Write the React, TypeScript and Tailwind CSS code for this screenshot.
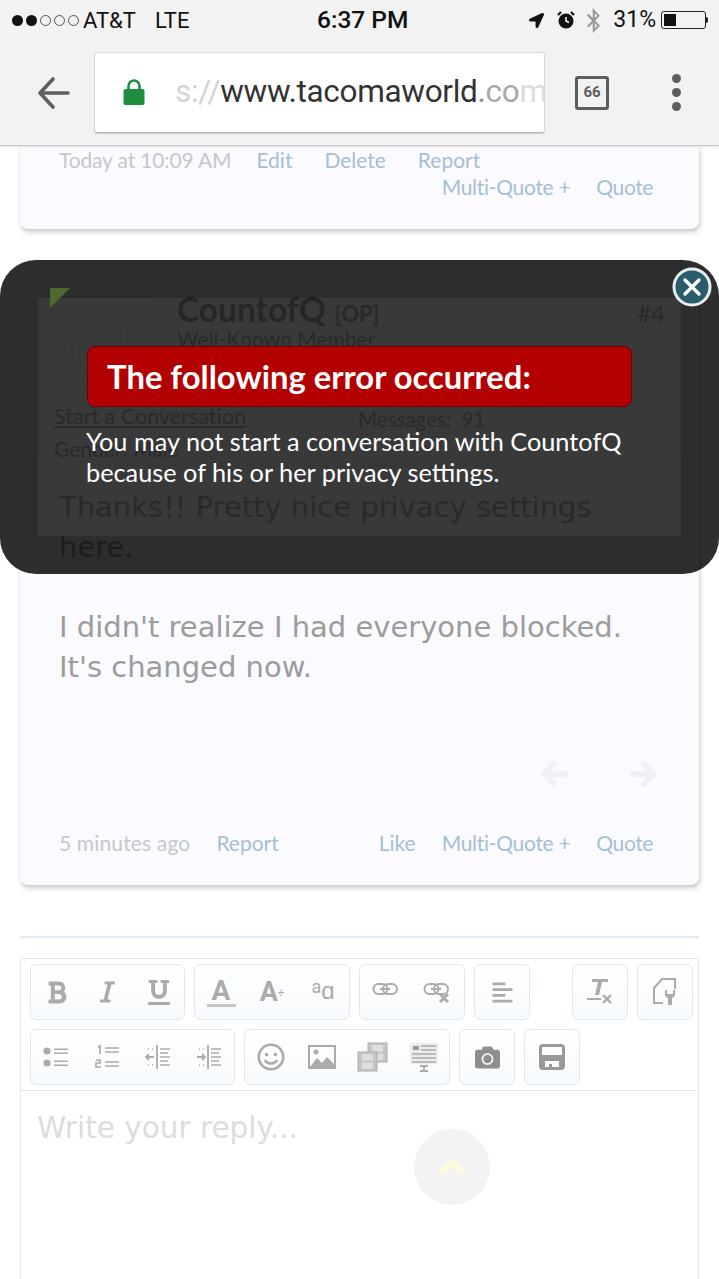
import React from 'react';
import { FaBold, FaItalic, FaUnderline, FaCamera, FaRegSmile, FaAlignLeft, FaLocationArrow, FaBluetoothB } from 'react-icons/fa';

const UI = { fontFamily: 'Roboto, sans-serif' };
const TREB = { fontFamily: 'Lato, sans-serif' };
const DEJA = { fontFamily: '"DejaVu Sans", sans-serif' };

const StatusBar = () => (
  <div className="flex h-[40px] items-center pl-[12px] pr-[11px] text-[22px] text-[#111]" style={UI}>
    <div className="flex w-[305px] items-center">
      <div className="flex gap-[3px]">
        {[0, 1].map((i) => <span key={i} className="h-[11px] w-[11px] rounded-full bg-[#111]" />)}
        {[2, 3, 4].map((i) => <span key={i} className="h-[11px] w-[11px] rounded-full border border-[#555]" />)}
      </div>
      <span className="ml-[4px]">AT&amp;T</span>
      <span className="ml-[19px]">LTE</span>
    </div>
    <span className="text-[24.5px] font-medium">6:37 PM</span>
    <div className="ml-auto flex items-center">
      <FaLocationArrow className="h-[15px] w-[15px] text-[#111]" />
      <svg viewBox="0 0 20 20" className="ml-[12px] h-[20px] w-[20px]">
        <circle cx="10" cy="11" r="7.5" fill="#111" />
        <path d="M10 7v4l3 1.5" stroke="#fff" strokeWidth="1.5" fill="none" />
        <path d="M2 5l3-3M18 5l-3-3" stroke="#111" strokeWidth="2.2" />
      </svg>
      <FaBluetoothB className="ml-[9px] h-[25px] w-[17px] text-[#999]" />
      <span className="ml-[11px] pt-[1px] text-[23px]">31%</span>
      <div className="ml-[5px] flex h-[18px] w-[45px] rounded-[3px] border border-[#222] p-[2px]">
        <div className="w-[12px] bg-[#111]" />
      </div>
      <div className="h-[6px] w-[2px] rounded-r bg-[#222]" />
    </div>
  </div>
);

const Toolbar = () => (
  <div className="flex h-[106px] items-center border-b border-[#c9c9c9] shadow-[0_1px_2px_rgba(0,0,0,0.12)]">
    <svg viewBox="0 0 34 32" className="ml-[37px] h-[32px] w-[34px]" fill="none" stroke="#5f5f5f" strokeWidth="3.6" strokeLinecap="round" strokeLinejoin="round">
      <path d="M31 16H3M16 2L3 16l13 14" />
    </svg>
    <div className="relative ml-[23px] flex h-[81px] w-[451px] items-center overflow-hidden rounded-[3px] border border-[#d8d8d8] border-b-[#b5b5b5] bg-white pb-[2px] shadow-[0_1px_1px_rgba(0,0,0,0.15)]">
      <svg viewBox="0 0 22 26" className="ml-[28px] h-[26px] w-[22px] shrink-0">
        <path d="M5.5 12V7a5.5 5.5 0 0 1 11 0v5" fill="none" stroke="#1e8e3e" strokeWidth="2.6" />
        <rect x="0.5" y="10" width="21" height="16" rx="2" fill="#1e8e3e" />
      </svg>
      <div className="ml-[30px] whitespace-nowrap text-[31.5px] tracking-[-0.3px] text-[#333]" style={UI}>
        <span className="text-[#cfd6d0]">s://</span>www.tacomaworld<span className="text-[#8d8d8d]">.</span><span className="text-[#a9a9a9]">co</span><span className="text-[#dcdcdc]">m</span>
      </div>
    </div>
    <div className="ml-[30px] flex h-[34px] w-[34px] items-center justify-center rounded-[3px] border-[3px] border-[#5d5d5d] text-[15px] font-bold text-[#5d5d5d]" style={UI}>66</div>
    <div className="ml-[63px] flex flex-col gap-[5px]">
      {[0, 1, 2].map((i) => <span key={i} className="h-[9px] w-[9px] rounded-full bg-[#5d5d5d]" />)}
    </div>
  </div>
);

const FirstCard = () => (
  <div className="mx-[20px] h-[83px] rounded-b-[8px] bg-[#fafaff] pl-[39px] pr-[46px] text-[21px] leading-[27px] shadow-[1px_3px_5px_rgba(0,0,0,0.22)]" style={TREB}>
    <div className="flex text-[#a5bfd4]">
      <span className="tracking-[-0.15px] text-[#c4c8cc]">Today at 10:09 AM</span>
      <span className="ml-[25px]">Edit</span>
      <span className="ml-[32px]">Delete</span>
      <span className="ml-[32px]">Report</span>
    </div>
    <div className="flex justify-end gap-[26px] text-[#a5bfd4]">
      <span className="tracking-[-0.3px]">Multi-Quote +</span>
      <span className="tracking-[-0.4px]">Quote</span>
    </div>
  </div>
);

const UserInfo = () => (
  <div className="relative mx-[18px] h-[208px] rounded-b-[8px] border-x border-b border-[#e8e8f0] text-[#9c9c9c]" style={TREB}>
    <div className="flex pl-[13px] pt-[38px]">
      <div className="flex h-[94px] w-[100px] shrink-0 items-center justify-center rounded-[4px] border border-[#e4e4ea]">
        <svg viewBox="0 0 80 80" className="h-[76px] w-[76px]" fill="none" stroke="#ececf2" strokeWidth="3">
          <circle cx="34" cy="46" r="26" />
          <path d="M22 58L66 14M42 14h24v24" />
        </svg>
      </div>
      <div className="ml-[25px] flex-1 pr-[15px]">
        <div className="-mt-[2px] flex items-baseline">
          <span className="text-[33.5px] font-bold leading-[30px] text-[#8a8d98]">CountofQ</span>
          <span className="ml-[9px] text-[22px] font-bold">[OP]</span>
          <span className="ml-auto text-[24px]">#4</span>
        </div>
        <div className="-mt-[4px] text-[21px] leading-[24px]">Well-Known Member</div>
      </div>
    </div>
    <div className="flex pl-[15px] pt-[12px] text-[21.5px] leading-[28px]">
      <span className="underline">Start a Conversation</span>
      <span className="ml-[112px] pt-[3px] text-[20.5px]">Messages:&nbsp; 91</span>
    </div>
    <div className="pl-[15px] pt-[2px] text-[21px] leading-[28px]">Gender: Male</div>
  </div>
);

const Arrow = ({ flip }: { flip?: boolean }) => (
  <svg viewBox="0 0 28 28" className={`h-[28px] w-[28px] ${flip ? 'scale-x-[-1]' : ''}`} fill="none" stroke="#f1f1f5" strokeWidth="6" strokeLinecap="round" strokeLinejoin="round">
    <path d="M25 14H5M14 4L4 14l10 10" />
  </svg>
);

const Post = () => (
  <div className="mx-[20px] mt-[29px] h-[627px] rounded-[8px] bg-[#fafaff] shadow-[1px_3px_5px_rgba(0,0,0,0.22)]">
    <UserInfo />
    <div className="pl-[39px] pr-[30px] pt-[21px] text-[29px] leading-[40px] text-[#9c9c9c]" style={DEJA}>
      <p>Thanks!! Pretty nice privacy settings here.</p>
      <p className="mt-[40px]">I didn't realize I had everyone blocked. It's changed now.</p>
    </div>
    <div className="mr-[41px] mt-[73px] flex justify-end gap-[62px]">
      <Arrow />
      <Arrow flip />
    </div>
    <div className="mt-[41px] flex pl-[39px] pr-[46px] text-[21px] leading-[27px] text-[#a5bfd4]" style={TREB}>
      <span className="tracking-[0.15px] text-[#c4c8cc]">5 minutes ago</span>
      <span className="ml-[26px]">Report</span>
      <span className="ml-auto">Like</span>
      <span className="ml-[26px] tracking-[-0.3px]">Multi-Quote +</span>
      <span className="ml-[26px] tracking-[-0.4px]">Quote</span>
    </div>
  </div>
);

const Btn = ({ children }: { children: React.ReactNode }) => (
  <div className="flex h-full w-[51px] items-center justify-center text-[#ababab]">{children}</div>
);

const Group = ({ children, className = '' }: { children: React.ReactNode; className?: string }) => (
  <div className={`flex h-[56px] justify-center rounded-[6px] border border-[#dfe9f2] bg-gradient-to-b from-white to-[#f7fafd] ${className}`}>{children}</div>
);

const LinkIcon = ({ x }: { x?: boolean }) => (
  <svg viewBox="0 0 30 22" className="h-[22px] w-[30px]" fill="none" stroke="#ababab" strokeWidth="2">
    <rect x="1.5" y="3" width="14" height="10" rx="5" />
    <rect x="11" y="3" width="14" height="10" rx="5" />
    <path d="M8 8h10" />
    {x && <path d="M17 13l8 8M25 13l-8 8" strokeWidth="3" />}
  </svg>
);

const Indent = ({ flip }: { flip?: boolean }) => (
  <svg viewBox="0 0 26 26" className="h-[26px] w-[26px]" fill="none" stroke="#ababab" strokeWidth="1.6">
    <path d="M12 1v24" strokeWidth="1.8" />
    <path d="M15 5h10M15 9h8M15 13h10M15 17h8M15 21h10" />
    {flip ? <path d="M1 13h8M6 10l3 3-3 3" strokeWidth="1.8" /> : <path d="M9 13H1M4 10l-3 3 3 3" strokeWidth="1.8" />}
    <path d="M3 5h1M7 5h1M3 21h1M7 21h1" />
  </svg>
);

const Film = ({ x, y }: { x: number; y: number }) => (
  <g transform={`translate(${x} ${y})`}>
    <rect width="19" height="19" fill="#c4c4c4" stroke="#adadad" />
    <rect x="4" y="2" width="11" height="6.5" fill="#dedede" />
    <rect x="4" y="10.5" width="11" height="6.5" fill="#dedede" />
  </g>
);

const EditorToolbar = () => (
  <div className="flex h-[133px] flex-col gap-[9px] border border-[#dde9f3] pl-[9px] pt-[5px]">
    <div className="flex gap-[9px]">
      <Group className="w-[155px]">
        <Btn><FaBold className="h-[25px] w-[22px]" /></Btn>
        <Btn><FaItalic className="h-[24px] w-[17px]" /></Btn>
        <Btn><FaUnderline className="h-[27px] w-[22px]" /></Btn>
      </Group>
      <Group className="w-[156px]">
        <Btn>
          <div className="flex flex-col items-center">
            <span className="text-[28px] font-bold leading-[26px]" style={UI}>A</span>
            <span className="h-[3px] w-[29px] bg-[#c4c4c4]" />
          </div>
        </Btn>
        <Btn><span className="text-[27px] font-bold" style={UI}>A<span className="align-middle text-[11px]">÷</span></span></Btn>
        <Btn><span className="text-[24px] leading-[30px]" style={UI}><span className="relative -top-[6px] text-[18px]">a</span>ɑ</span></Btn>
      </Group>
      <Group className="w-[106px]">
        <Btn><LinkIcon /></Btn>
        <Btn><LinkIcon x /></Btn>
      </Group>
      <Group className="w-[56px]"><Btn><FaAlignLeft className="h-[23px] w-[23px]" /></Btn></Group>
      <Group className="ml-[33px] w-[56px]">
        <Btn>
          <svg viewBox="0 0 28 28" className="h-[28px] w-[28px]" fill="#ababab">
            <path d="M6 1h16v3h-6l-3 13H9l3-13H6z" />
            <path d="M1 20h14v2H1z" />
            <path d="M17 17l8 8M25 17l-8 8" stroke="#ababab" strokeWidth="2.4" />
          </svg>
        </Btn>
      </Group>
      <Group className="w-[56px]">
        <Btn>
          <svg viewBox="0 0 26 30" className="h-[30px] w-[26px]" fill="none" stroke="#ababab" strokeWidth="2">
            <path d="M11 26H2V11L10 2h13v10" />
            <path d="M13 13v5a4 4 0 0 0 3 3v7h4v-7a4 4 0 0 0 3-3v-5l-2 0v4h-6v-4z" fill="#ababab" stroke="none" />
          </svg>
        </Btn>
      </Group>
    </div>
    <div className="flex gap-[9px]">
      <Group className="w-[205px]">
        <Btn>
          <svg viewBox="0 0 28 24" className="h-[24px] w-[28px]" fill="#ababab">
            <circle cx="5" cy="6" r="3.6" /><circle cx="5" cy="18" r="3.6" />
            <path d="M12 3.5h14v1.6H12zM12 7.5h14v1.6H12zM12 15.5h14v1.6H12zM12 19.5h14v1.6H12z" />
          </svg>
        </Btn>
        <Btn>
          <svg viewBox="0 0 26 26" className="h-[26px] w-[26px]" fill="none" stroke="#ababab" strokeWidth="1.7">
            <path d="M4 3l2-1v8M2 16h4v3H2v4h5" />
            <path d="M11 4h14M11 8h14M11 18h14M11 22h14" />
          </svg>
        </Btn>
        <Btn><Indent /></Btn>
        <Btn><Indent flip /></Btn>
      </Group>
      <Group className="w-[206px]">
        <Btn><FaRegSmile className="h-[28px] w-[28px]" /></Btn>
        <Btn>
          <svg viewBox="0 0 28 24" className="h-[24px] w-[28px]">
            <rect x="1" y="1" width="26" height="22" fill="none" stroke="#ababab" strokeWidth="2" />
            <path d="M2 22l7-9 5 5 5-6 7 7v3z" fill="#ababab" />
            <circle cx="8" cy="7" r="2.5" fill="#ababab" />
          </svg>
        </Btn>
        <Btn>
          <svg viewBox="0 0 32 30" className="h-[30px] w-[32px]">
            <Film x={11} y={1} />
            <Film x={1} y={10} />
          </svg>
        </Btn>
        <Btn>
          <svg viewBox="0 0 30 30" className="h-[30px] w-[30px]" fill="none" stroke="#ababab" strokeWidth="1.7">
            <rect x="1" y="1" width="28" height="21" fill="#ececec" stroke="none" />
            <rect x="4" y="4" width="6" height="4" fill="#9a9a9a" stroke="none" />
            <path d="M12 4h15M12 8h15M3 12h24M3 16h24M3 20h24" />
            <path d="M11 24h8M15 24v5M11 29h8" strokeWidth="1.8" />
          </svg>
        </Btn>
      </Group>
      <Group className="w-[56px]"><Btn><FaCamera className="h-[25px] w-[31px] text-[#8e8e8e]" /></Btn></Group>
      <Group className="w-[56px]">
        <Btn>
          <svg viewBox="0 0 28 28" className="h-[28px] w-[28px]" fill="#999" fillRule="evenodd">
            <path d="M5 1h18a4 4 0 0 1 4 4v18a4 4 0 0 1-4 4H5a4 4 0 0 1-4-4V5a4 4 0 0 1 4-4zM5 4a1 1 0 0 0-1 1v7h20V5a1 1 0 0 0-1-1zM7 18v6h4v-3h3v3h7v-6z" />
          </svg>
        </Btn>
      </Group>
    </div>
  </div>
);

const Editor = () => (
  <div className="mx-[20px] mt-[51px] border-t-2 border-[#e0ebf3] pt-[20px]">
    <EditorToolbar />
    <div className="h-[200px] border-x border-[#dde9f3] pl-[16px] pt-[19px] text-[29.5px] leading-[36px] text-[#dddddd]" style={DEJA}>
      Write your reply...
    </div>
  </div>
);

const ErrorOverlay = () => (
  <div className="absolute left-0 right-0 top-[260px] h-[314px] rounded-[36px] bg-black/82 p-[38px]">
    <div className="h-[238px] bg-white/6 px-[49px] pt-[48px]" style={TREB}>
      <div className="flex h-[61px] items-center rounded-[8px] border border-[#6f0000] bg-[#b30000] pl-[19px] text-[32.8px] font-bold text-white">
        The following error occurred:
      </div>
      <p className="-ml-[1px] mt-[19px] text-[25.3px] leading-[31px] text-white">
        You may not start a conversation with CountofQ because of his or her privacy settings.
      </p>
    </div>
    {/* corner flag on the avatar */}
    <div className="absolute left-[50px] top-[28px] h-0 w-0 border-r-[20px] border-t-[20px] border-r-transparent border-t-[#4c6a2e]" />
    <svg viewBox="0 0 40 40" className="absolute right-[7px] top-[7px] h-[40px] w-[40px]">
      <circle cx="20" cy="20" r="18" fill="#2a5d6b" stroke="#e6eef0" strokeWidth="3" />
      <path d="M13 13l14 14M27 13L13 27" stroke="#fff" strokeWidth="3.4" strokeLinecap="round" />
    </svg>
  </div>
);

export default function App() {
  return (
    <div className="relative h-[1279px] w-[719px] overflow-hidden bg-white">
      <div className="relative z-10 bg-[#f2f2f2]">
        <StatusBar />
        <Toolbar />
      </div>
      <FirstCard />
      <Post />
      <Editor />
      <ErrorOverlay />
      <div className="absolute left-[414px] top-[1129px] flex h-[76px] w-[76px] items-center justify-center rounded-full bg-[#f3f3f3]">
        <svg viewBox="0 0 32 22" className="h-[20px] w-[30px]" fill="none" stroke="#fdfbd8" strokeWidth="6" strokeLinecap="round" strokeLinejoin="round">
          <path d="M4 17L16 6l12 11" />
        </svg>
      </div>
    </div>
  );
}
